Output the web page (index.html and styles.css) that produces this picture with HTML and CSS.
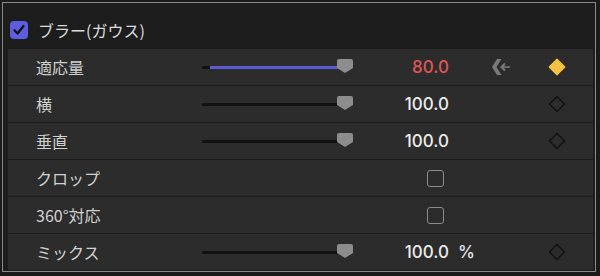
FILE: index.html
```html
<!DOCTYPE html>
<html lang="ja">
<head>
<meta charset="utf-8">
<link rel="stylesheet" href="styles.css">
</head>
<body>
<div class="frame">
  <div class="header">
    <span class="hcheck">
      <svg width="18" height="18" viewBox="0 0 18 18"><path d="M4.5 9.2 L7.6 12.5 L13.5 5" fill="none" stroke="#111" stroke-width="2.2" stroke-linecap="round" stroke-linejoin="round"/></svg>
    </span>
    <span class="htitle">ブラー(ガウス)</span>
  </div>
  <div class="rows">
    <div class="row">
      <span class="label">適応量</span>
      <div class="slider">
        <div class="track"><div class="fill" style="width:135px"></div></div>
        <svg class="thumb" width="16" height="14" viewBox="0 0 16 14"><path d="M2 0 H14 Q16 0 16 2 V9 L8 14 L0 9 V2 Q0 0 2 0 Z" fill="#8d8d8d"/></svg>
      </div>
      <span class="value red">80.0</span>
      <span class="unit"></span>
      <span class="nav">
        <svg width="20" height="18" viewBox="0 0 20 18"><polygon points="6,1 10.5,1 5.5,9 10.5,17 6,17 1,9" fill="#7a7a7a"/><polyline points="14,5.5 10.5,9 14,12.5" fill="none" stroke="#7a7a7a" stroke-width="2"/><line x1="11" y1="9" x2="19" y2="9" stroke="#7a7a7a" stroke-width="1.6"/></svg>
      </span>
      <span class="spacer"></span>
      <svg class="kf" width="18" height="18" viewBox="0 0 18 18"><path d="M9 1.2 L16.8 9 L9 16.8 L1.2 9 Z" fill="#f6c243" stroke="#f6c243" stroke-width="1.2" stroke-linejoin="round"/></svg>
    </div>
    <div class="row">
      <span class="label">横</span>
      <div class="slider">
        <div class="track"></div>
        <svg class="thumb" width="16" height="14" viewBox="0 0 16 14"><path d="M2 0 H14 Q16 0 16 2 V9 L8 14 L0 9 V2 Q0 0 2 0 Z" fill="#8d8d8d"/></svg>
      </div>
      <span class="value">100.0</span>
      <span class="unit"></span>
      <span class="nav"></span>
      <span class="spacer"></span>
      <svg class="kf" width="18" height="18" viewBox="0 0 18 18"><path d="M9 1.5 L16.5 9 L9 16.5 L1.5 9 Z" fill="none" stroke="#121212" stroke-width="1.5"/></svg>
    </div>
    <div class="row">
      <span class="label">垂直</span>
      <div class="slider">
        <div class="track"></div>
        <svg class="thumb" width="16" height="14" viewBox="0 0 16 14"><path d="M2 0 H14 Q16 0 16 2 V9 L8 14 L0 9 V2 Q0 0 2 0 Z" fill="#8d8d8d"/></svg>
      </div>
      <span class="value">100.0</span>
      <span class="unit"></span>
      <span class="nav"></span>
      <span class="spacer"></span>
      <svg class="kf" width="18" height="18" viewBox="0 0 18 18"><path d="M9 1.5 L16.5 9 L9 16.5 L1.5 9 Z" fill="none" stroke="#121212" stroke-width="1.5"/></svg>
    </div>
    <div class="row">
      <span class="label">クロップ</span>
      <span class="empty"></span>
      <span class="value"><span class="box"></span></span>
    </div>
    <div class="row">
      <span class="label">360°対応</span>
      <span class="empty"></span>
      <span class="value"><span class="box"></span></span>
    </div>
    <div class="row">
      <span class="label">ミックス</span>
      <div class="slider">
        <div class="track"></div>
        <svg class="thumb" width="16" height="14" viewBox="0 0 16 14"><path d="M2 0 H14 Q16 0 16 2 V9 L8 14 L0 9 V2 Q0 0 2 0 Z" fill="#8d8d8d"/></svg>
      </div>
      <span class="value">100.0</span>
      <span class="unit">%</span>
      <span class="nav"></span>
      <span class="spacer"></span>
      <svg class="kf" width="18" height="18" viewBox="0 0 18 18"><path d="M9 1.5 L16.5 9 L9 16.5 L1.5 9 Z" fill="none" stroke="#121212" stroke-width="1.5"/></svg>
    </div>
  </div>
</div>
</body>
</html>
```
FILE: styles.css
```css
html, body {
  margin: 0;
  padding: 0;
  background: #1b1b1b;
  width: 600px;
  height: 276px;
  overflow: hidden;
}
body {
  font-family: "Noto Sans CJK JP", "Noto Sans", sans-serif;
}
.frame {
  margin: 2px 4px 0 2px;
  border: 1px solid #8a8a8a;
  height: 268px;
  background: #1d1d1d;
}
.header {
  height: 46px;
  box-sizing: border-box;
  padding: 8px 0 0 7px;
  display: flex;
  align-items: center;
  gap: 10px;
}
.hcheck {
  width: 18px;
  height: 18px;
  border-radius: 4px;
  background: #5d5ddf;
  display: flex;
}
.htitle {
  color: #dcdcdc;
  font-size: 16px;
  font-weight: 400;
  line-height: 1;
}
.rows {
  padding: 0 2px 0 5px;
  display: flex;
  flex-direction: column;
  gap: 1px;
}
.row {
  height: 36px;
  background: #2c2c2c;
  display: grid;
  grid-template-columns: 166px 152px 95px 40px 24px 1fr 18px;
  align-items: center;
  padding: 0 27px 0 28px;
}
.label {
  color: #d2d2d2;
  font-size: 16px;
  line-height: 1;
}
.slider {
  position: relative;
  height: 36px;
  display: flex;
  align-items: center;
}
.track {
  width: 143px;
  height: 3px;
  border-radius: 2px;
  background: #111;
  display: flex;
  justify-content: flex-end;
}
.fill {
  height: 3px;
  background: #5b5bd8;
}
.thumb {
  position: absolute;
  left: 135px;
  top: 10px;
}
.value {
  justify-self: end;
  color: #ebebeb;
  font-family: "Inter", "Liberation Sans", sans-serif;
  font-weight: 500;
  font-size: 17px;
  line-height: 1;
  display: flex;
}
.value.red {
  color: #e05656;
}
.unit {
  color: #e6e6e6;
  font-family: "Inter", "Liberation Sans", sans-serif;
  font-weight: 500;
  font-size: 17px;
  padding-left: 9px;
  line-height: 1;
}
.nav {
  display: flex;
  margin-left: 2px;
}
.box {
  width: 15px;
  height: 15px;
  border: 1.5px solid #8b8b8b;
  border-radius: 3px;
  margin-right: 5px;
  display: block;
}
.kf {
  display: block;
}
```
